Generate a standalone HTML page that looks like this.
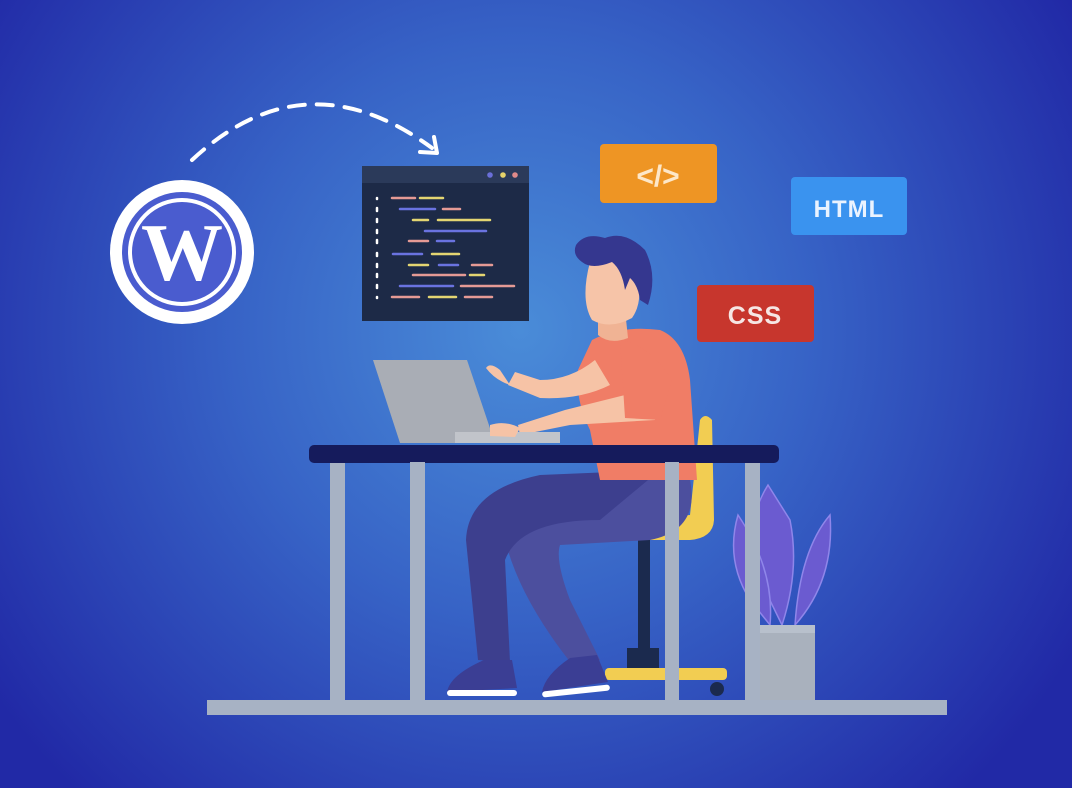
<!DOCTYPE html>
<html><head><meta charset="utf-8"><style>
html,body{margin:0;padding:0;width:1072px;height:788px;overflow:hidden}
svg{display:block}
</style></head><body>
<svg width="1072" height="788" viewBox="0 0 1072 788" xmlns="http://www.w3.org/2000/svg">
<defs>
<radialGradient id="bg" cx="520" cy="330" r="640" gradientUnits="userSpaceOnUse">
<stop offset="0" stop-color="#4a8cd8"/>
<stop offset="0.45" stop-color="#3763c6"/>
<stop offset="1" stop-color="#2129a6"/>
</radialGradient>
</defs>
<rect width="1072" height="788" fill="url(#bg)"/>

<path d="M192 160 Q305 55 432 148" fill="none" stroke="#fff" stroke-width="4" stroke-dasharray="16 12" stroke-linecap="round"/>
<path d="M420 152 L437 153 L434 137" fill="none" stroke="#fff" stroke-width="4" stroke-linecap="round" stroke-linejoin="round"/>

<circle cx="182" cy="252" r="72" fill="#fff"/>
<circle cx="182" cy="252" r="60" fill="#4a5ccf"/>
<circle cx="182" cy="252" r="52" fill="none" stroke="#fff" stroke-width="4"/>
<text x="182" y="280" style="font-family:'Liberation Serif',serif;font-weight:bold" font-size="82" fill="#fff" text-anchor="middle">W</text>

<rect x="362" y="166" width="167" height="155" fill="#1d2a47"/>
<rect x="362" y="166" width="167" height="17" fill="#2b3a5a"/>
<circle cx="490" cy="175" r="2.8" fill="#6a6fd8"/><circle cx="503" cy="175" r="2.8" fill="#e6d36a"/><circle cx="515" cy="175" r="2.8" fill="#e08a8a"/>
<g stroke-width="2.5" stroke-linecap="round">
<path d="M377 198v1M377 208v3M377 219v3M377 230v3M377 240v3M377 253v3M377 264v3M377 274v3M377 285v3M377 297v1" stroke="#fff"/>
<path d="M392 198h23M443 209h17M409 241h19M472 265h20M413 275h52M461 286h53M392 297h27M465 297h27" stroke="#e59a95"/>
<path d="M420 198h23M413 220h15M438 220h52M432 254h27M409 265h19M470 275h14M429 297h27" stroke="#e4d572"/>
<path d="M400 209h35M425 231h61M437 241h17M393 254h29M439 265h19M400 286h53" stroke="#6a73e0"/>
</g>

<rect x="600" y="144" width="117" height="59" rx="4" fill="#ee9524"/>
<text x="658" y="186" style="font-family:'Liberation Sans',sans-serif;font-weight:bold" font-size="30" fill="#fde7c8" text-anchor="middle">&lt;/&gt;</text>
<rect x="791" y="177" width="116" height="58" rx="4" fill="#3a93ef"/>
<text x="849" y="217" style="font-family:'Liberation Sans',sans-serif;font-weight:bold" font-size="24" fill="#eaf3ff" text-anchor="middle" letter-spacing="1">HTML</text>
<rect x="697" y="285" width="117" height="57" rx="4" fill="#c7362d"/>
<text x="755" y="324" style="font-family:'Liberation Sans',sans-serif;font-weight:bold" font-size="25" fill="#f6e6e4" text-anchor="middle" letter-spacing="1">CSS</text>

<rect x="207" y="700" width="740" height="15" fill="#a7b2c4"/>

<g fill="#6b5bd0" stroke="#8f86ea" stroke-width="1.5">
<path d="M768 485 Q740 530 760 580 L782 625 Q800 570 790 520 Z"/>
<path d="M738 515 Q725 560 750 600 L770 625 Q775 570 738 515 Z"/>
<path d="M830 515 Q800 550 795 625 Q835 580 830 515 Z"/>
</g>
<rect x="757" y="625" width="58" height="75" fill="#a9b1bd"/>
<rect x="757" y="625" width="58" height="8" fill="#b8c0cc"/>

<rect x="638" y="535" width="12" height="125" fill="#1b2a4e"/>
<rect x="627" y="648" width="32" height="20" fill="#1b2a4e"/>
<rect x="605" y="668" width="122" height="12" rx="4" fill="#f2cd52"/>
<circle cx="717" cy="689" r="7" fill="#1b2a4e"/>
<path d="M700 420 Q705 412 712 420 L714 520 Q713 538 690 540 L605 540 Q598 528 612 520 L690 515 Z" fill="#f2cd52"/>

<rect x="330" y="462" width="15" height="238" fill="#a7b2c4"/>
<rect x="745" y="462" width="15" height="238" fill="#a7b2c4"/>

<path d="M690 480 Q700 530 650 540 L560 545 Q555 560 570 600 L600 660 L575 668 Q520 600 505 540 Q495 500 540 480 Z" fill="#4c4f9e"/>
<path d="M660 470 L540 475 Q468 490 466 540 L478 660 L510 662 L505 560 Q520 520 600 520 Z" fill="#3d3f8e"/>
<path d="M484 660 L512 660 L517 688 L447 692 Q450 675 484 660 Z" fill="#3b3e94"/>
<rect x="447" y="690" width="70" height="6" rx="3" fill="#fff"/>
<path d="M570 658 L597 655 L608 682 L542 692 Q545 675 570 658 Z" fill="#3b3e94"/>
<rect x="542" y="688" width="68" height="6" rx="3" transform="rotate(-6 576 691)" fill="#fff"/>

<path d="M592 340 Q620 325 660 330 Q685 340 690 380 L697 480 L600 480 L590 430 Q575 400 578 370 Z" fill="#f07d66"/>
<path d="M595 360 Q570 380 540 380 L515 372 L508 385 L540 398 Q580 400 610 385 Z" fill="#f6c3a6"/>
<path d="M500 370 Q490 362 486 368 Q495 380 510 385 Z" fill="#f6c3a6"/>
<path d="M640 360 Q665 380 655 420 L570 425 L520 435 L518 425 L565 410 L625 395 Z" fill="#f6c3a6"/>
<path d="M620 340 Q650 345 672 380 L660 420 L625 418 Z" fill="#f07d66"/>
<path d="M598 315 L625 310 L628 338 Q610 345 598 335 Z" fill="#f0b394"/>
<path d="M590 262 Q612 255 635 268 Q645 300 632 318 Q610 330 592 320 Q580 300 590 262 Z" fill="#f6c4a8"/>
<path d="M576 245 Q585 232 605 238 Q625 230 645 250 Q658 275 648 305 L640 300 Q638 285 630 278 L625 290 Q622 270 612 262 Q592 270 582 262 Q572 255 576 245 Z" fill="#35378f"/>

<path d="M373 360 L467 360 L495 443 L400 443 Z" fill="#a9adb5"/>
<rect x="455" y="432" width="105" height="11" fill="#c1c4ca"/>
<path d="M490 425 Q505 420 520 428 L515 437 L490 436 Z" fill="#f6c3a6"/>

<rect x="309" y="445" width="470" height="18" rx="5" fill="#151b5c"/>
<rect x="410" y="462" width="15" height="238" fill="#a7b2c4"/>
<rect x="665" y="462" width="14" height="238" fill="#a7b2c4"/>
</svg>
</body></html>
